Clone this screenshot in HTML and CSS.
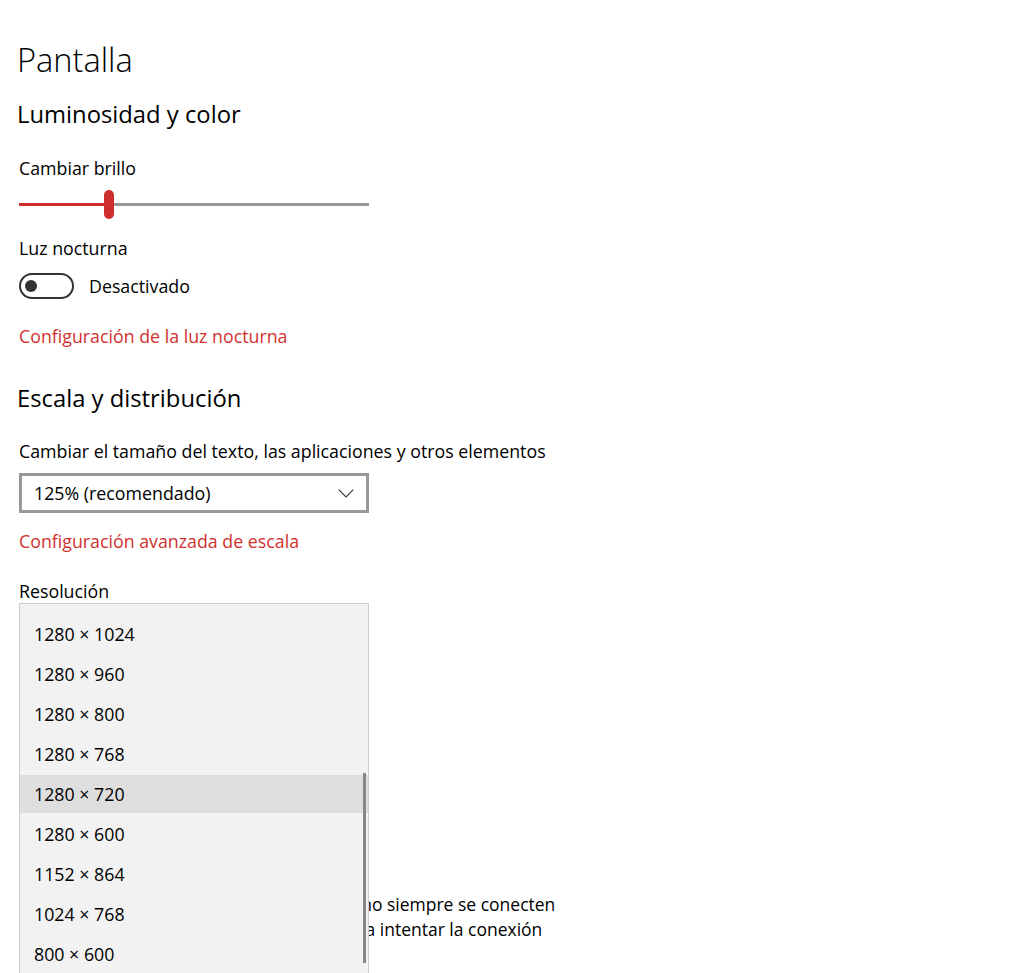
FILE: index.html
```html
<!DOCTYPE html>
<html lang="es">
<head>
<meta charset="utf-8">
<title>Pantalla</title>
<link rel="stylesheet" href="styles.css">
</head>
<body>
<main class="page">
  <h1 class="title">Pantalla</h1>

  <h2 class="section section-first">Luminosidad y color</h2>
  <div class="label label-brightness">Cambiar brillo</div>
  <div class="slider">
    <div class="slider-fill" style="width: 24.3%"></div>
    <div class="slider-thumb"></div>
    <div class="slider-rest"></div>
  </div>

  <div class="label label-night">Luz nocturna</div>
  <div class="toggle-row">
    <div class="toggle"><span class="toggle-knob"></span></div>
    <span class="toggle-text">Desactivado</span>
  </div>
  <a class="link link-night" href="#">Configuración de la luz nocturna</a>

  <h2 class="section section-scale">Escala y distribución</h2>
  <div class="label label-size">Cambiar el tamaño del texto, las aplicaciones y otros elementos</div>
  <div class="combo">
    <span class="combo-text">125% (recomendado)</span>
    <svg class="chevron" width="16" height="9" viewBox="0 0 16 9"><path d="M0.7 0.7 L8 8 L15.3 0.7" fill="none" stroke="#333" stroke-width="1.1"/></svg>
  </div>
  <a class="link link-scale" href="#">Configuración avanzada de escala</a>

  <div class="field-res">
    <div class="label label-res">Resolución</div>
    <ul class="popup">
      <li class="item">1280 × 1024</li>
      <li class="item">1280 × 960</li>
      <li class="item">1280 × 800</li>
      <li class="item">1280 × 768</li>
      <li class="item selected">1280 × 720</li>
      <li class="item">1280 × 600</li>
      <li class="item">1152 × 864</li>
      <li class="item">1024 × 768</li>
      <li class="item">800 × 600</li>
      <li class="scrollbar"></li>
    </ul>
  </div>

  <p class="para">Es posible que algunas pantallas antiguas no siempre se conecten<br>automáticamente. Selecciona Detectar para intentar la conexión</p>
</main>
</body>
</html>
```

FILE: styles.css
```css
html, body {
  margin: 0;
  padding: 0;
  background: #ffffff;
  height: 100%;
  overflow: hidden;
}

body {
  font-family: "Open Sans", "Noto Sans", "DejaVu Sans", sans-serif;
  color: #000000;
  font-size: 17.8px;
}

.page {
  padding: 40px 19px 0 19px;
}

.title {
  margin: 0 0 0 -2px;
  font-size: 32.6px;
  line-height: 40px;
  font-weight: 300;
  height: 40px;
}

.section {
  margin: 0 0 0 -2px;
  font-size: 23.8px;
  line-height: 32px;
  height: 32px;
  font-weight: 400;
}

.section-first { margin-top: 18px; }
.section-scale { margin-top: 34px; }

.label {
  line-height: 24px;
  height: 24px;
  white-space: nowrap;
}

.label-brightness { margin-top: 26px; }
.label-night { margin-top: 17px; }
.label-size { margin-top: 25px; }
.label-res { margin-top: 0; }

.slider {
  margin-top: 10px;
  width: 350px;
  height: 29px;
  display: flex;
  align-items: center;
}

.slider-fill {
  height: 3px;
  background: #cf2f2c;
}

.slider-thumb {
  width: 10px;
  height: 29px;
  border-radius: 5px;
  background: #cf2f2c;
  flex: none;
}

.slider-rest {
  flex: 1;
  height: 3px;
  background: #999999;
}

.toggle-row {
  margin-top: 13px;
  height: 26px;
  display: flex;
  align-items: center;
}

.toggle {
  box-sizing: border-box;
  width: 55px;
  height: 26px;
  border: 2px solid #333333;
  border-radius: 13px;
  display: flex;
  align-items: center;
  padding-left: 4px;
}

.toggle-knob {
  width: 12px;
  height: 12px;
  border-radius: 50%;
  background: #333333;
}

.toggle-text {
  margin-left: 15px;
  line-height: 24px;
}

.link {
  display: block;
  color: #d0312d;
  text-decoration: none;
  line-height: 24px;
  height: 24px;
  white-space: nowrap;
}

.link-night { margin-top: 25px; }
.link-scale { margin-top: 16px; }

.combo {
  box-sizing: border-box;
  margin-top: 10px;
  width: 350px;
  height: 40px;
  border: 3px solid #999999;
  display: flex;
  align-items: center;
  justify-content: space-between;
  padding: 0 12px 0 12px;
}

.combo-text {
  line-height: 24px;
}

.chevron {
  display: block;
}

.field-res {
  position: relative;
  margin-top: 26px;
  height: 24px;
}

.popup {
  position: absolute;
  top: 24px;
  left: 0;
  box-sizing: border-box;
  width: 350px;
  margin: 0;
  padding: 10px 0;
  list-style: none;
  background: #f2f2f2;
  border: 1px solid #cccccc;
  z-index: 2;
}

.item {
  box-sizing: border-box;
  height: 40px;
  line-height: 38px;
  border-top: 1px solid transparent;
  border-bottom: 1px solid transparent;
  background-clip: padding-box;
  padding-left: 14px;
  white-space: nowrap;
}

.item.selected {
  background-color: #dedede;
}

.scrollbar {
  position: absolute;
  right: 2px;
  top: 169px;
  width: 3px;
  height: 190px;
  background: #868686;
}

.para {
  margin: 289px 0 0 0;
  font-size: 17.5px;
  line-height: 25px;
  white-space: nowrap;
}
```
